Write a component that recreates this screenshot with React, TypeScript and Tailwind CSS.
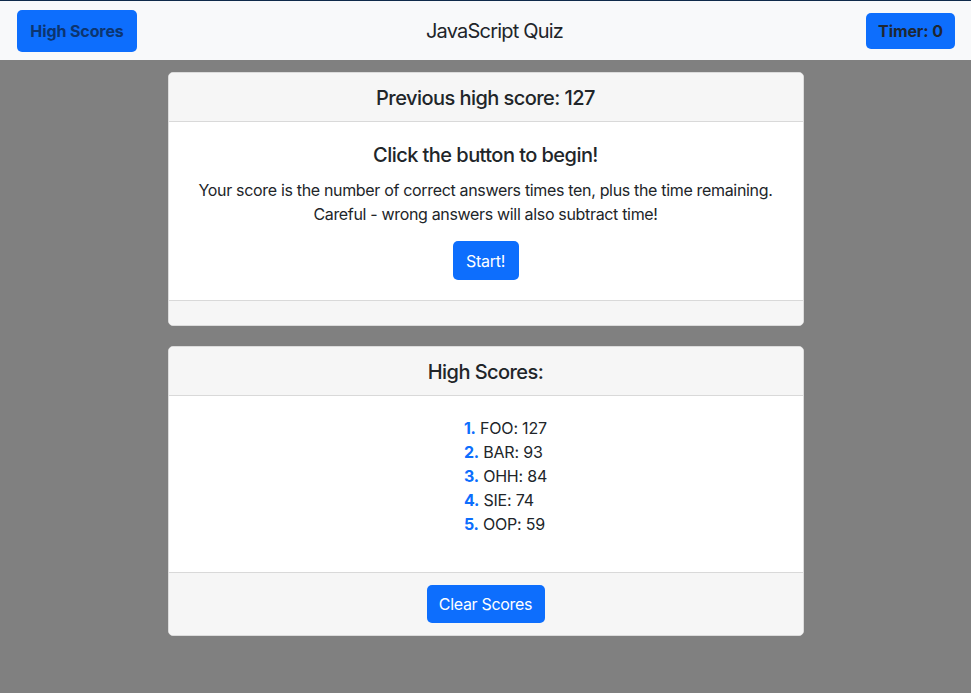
const scores = [
  { name: "FOO", score: 127 },
  { name: "BAR", score: 93 },
  { name: "OHH", score: 84 },
  { name: "SIE", score: 74 },
  { name: "OOP", score: 59 },
];

export default function App() {
  return (
    <div
      className="flex min-h-[693px] flex-col bg-[#808080] tracking-[-0.3px] text-[#212529]"
      style={{ fontFamily: "Inter, 'Noto Sans', sans-serif" }}
    >
      {/* Top bar */}
      <header className="flex h-[60px] items-center justify-between border-t border-[#0f2a4a] bg-[#f8f9fa] pl-[17px] pr-4">
        <button className="h-[42px] w-[120px] rounded-[5px] bg-[#0d6efd] text-base font-bold tracking-[-0.1px] text-[#0c3570]">
          High Scores
        </button>
        <h1 className="pr-[14px] text-xl font-normal tracking-[-0.8px]">JavaScript Quiz</h1>
        <button className="mt-[1px] h-[36px] w-[89px] rounded-[5px] bg-[#0d6efd] text-base font-bold tracking-[-0.1px] text-[#1f2733]">
          Timer: 0
        </button>
      </header>

      <main className="mx-auto flex w-[636px] flex-col gap-[20px] pt-3">
        {/* Start card */}
        <section className="overflow-hidden rounded-[5px] border border-[#dcdcdc] bg-white">
          <div className="flex h-[49px] items-center justify-center border-b border-[#d9d9d9] bg-[#f6f6f6]">
            <h2 className="pt-[2px] text-xl font-medium tracking-[-0.55px]">Previous high score: 127</h2>
          </div>
          <div className="flex h-[178px] flex-col items-center pt-[21px] text-center">
            <h3 className="text-xl font-medium leading-6 tracking-[-0.55px]">Click the button to begin!</h3>
            <p className="mt-[11px] text-base leading-6 tracking-[-0.33px]">
              Your score is the number of correct answers times ten, plus the time remaining.
              <br />
              Careful - wrong answers will also subtract time!
            </p>
            <button className="mt-[15px] h-[39px] w-[66px] rounded-[5px] bg-[#0d6efd] text-base text-white">
              Start!
            </button>
          </div>
          <div className="h-[25px] border-t border-[#d9d9d9] bg-[#f6f6f6]" />
        </section>

        {/* High scores card */}
        <section className="overflow-hidden rounded-[5px] border border-[#dcdcdc] bg-white">
          <div className="flex h-[49px] items-center justify-center border-b border-[#d9d9d9] bg-[#f6f6f6]">
            <h2 className="pt-[1px] text-xl font-medium tracking-[-0.55px]">High Scores:</h2>
          </div>
          <div className="h-[176px] pt-[20px] text-center">
            <ol className="inline-block pl-10 text-left text-base leading-6 tracking-[-0.2px]">
              {scores.map((s, i) => (
                <li key={s.name}>
                  <span className="font-bold text-[#0d6efd]">{i + 1}.</span> {s.name}: {s.score}
                </li>
              ))}
            </ol>
          </div>
          <div className="flex h-[63px] items-center justify-center border-t border-[#d9d9d9] bg-[#f6f6f6]">
            <button className="h-[38px] w-[118px] rounded-[5px] bg-[#0d6efd] text-base text-white">
              Clear Scores
            </button>
          </div>
        </section>
      </main>
    </div>
  );
}
